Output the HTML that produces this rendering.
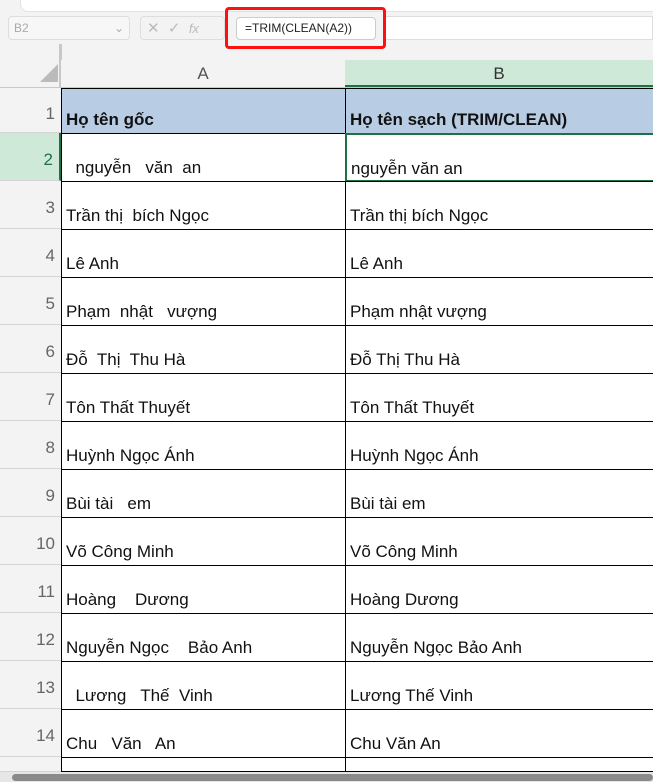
<!DOCTYPE html>
<html style="width:653px;height:782px;overflow:hidden"><head><meta charset="utf-8"><style>
*{margin:0;padding:0;box-sizing:border-box}
body{width:653px;height:782px;overflow:hidden;background:#f3f3f3;font-family:"Liberation Sans",sans-serif;position:relative}
.abs{position:absolute}
.rh{position:absolute;left:0;width:61px;background:#f3f3f3;border-bottom:1px solid #d4d4d4;color:#666;font-size:17px;text-align:right;padding-right:6px;overflow:hidden}
.cell{position:absolute;font-size:17px;color:#111;white-space:pre;padding-left:4px;overflow:hidden}
</style></head><body>
<div class="abs" style="left:20px;top:0;width:640px;height:12px;background:#fff;border-radius:0 0 8px 8px;border:1px solid #e2e2e2;border-top:none"></div>
<div class="abs" style="left:8px;top:16px;width:122px;height:24px;background:#f7f7f7;border:1px solid #ddd;border-radius:4px;font-size:12px;color:#aaa;padding:4px 5px">B2<span style="float:right">&#8964;</span></div>
<div class="abs" style="left:140px;top:16px;width:85px;height:24px;border:1px solid #ddd;border-radius:4px;color:#bbb;font-size:15px;padding:2px 6px">✕ &nbsp;✓ &nbsp;<i style="font-size:13px">fx</i></div>
<div class="abs" style="left:225px;top:7px;width:161px;height:42px;border:3px solid #ff1010;border-radius:4px"></div>
<div class="abs" style="left:236px;top:17px;width:140px;height:23px;background:#fff;border:1px solid #ccc;border-radius:4px;font-size:12px;color:#222;padding:3px 8px">=TRIM(CLEAN(A2))</div>
<div class="abs" style="left:386px;top:16px;width:267px;height:24px;background:#fff;border:1px solid #ddd;border-left:none"></div>
<div class="abs" style="left:59px;top:44px;width:3px;height:44px;background:#c8c8c8"></div>
<div class="abs" style="left:40px;top:64px;width:0;height:0;border-left:18px solid transparent;border-bottom:18px solid #bbb"></div>
<div class="abs" style="left:0;top:87px;width:653px;height:1px;background:#c8c8c8"></div>
<div class="abs" style="left:61px;top:60px;width:284px;height:27px;font-size:17px;color:#555;text-align:center;line-height:28px;background:#f3f3f3">A</div>
<div class="abs" style="left:345px;top:60px;width:308px;height:27px;font-size:17px;color:#333;text-align:center;line-height:28px;background:#cfe9d8;border-bottom:2px solid #1e7145">B</div>
<div class="abs" style="left:61px;top:88px;width:592px;height:684px;background:#fff"></div>
<div id="g"></div>
<div class="abs" style="left:0;top:772px;width:653px;height:10px;background:#e6e6e6"></div>
<div class="abs" style="left:12px;top:774px;width:641px;height:7px;background:#8a8a8a;border-radius:4px"></div>
<script>
var rows=[["Họ tên gốc","Họ tên sạch (TRIM/CLEAN)"],["  nguyễn   văn  an","nguyễn văn an"],["Trần thị  bích Ngọc","Trần thị bích Ngọc"],["Lê Anh","Lê Anh"],["Phạm  nhật   vượng","Phạm nhật vượng"],["Đỗ  Thị  Thu Hà","Đỗ Thị Thu Hà"],["Tôn Thất Thuyết","Tôn Thất Thuyết"],["Huỳnh Ngọc Ánh","Huỳnh Ngọc Ánh"],["Bùi tài   em","Bùi tài em"],["Võ Công Minh","Võ Công Minh"],["Hoàng    Dương","Hoàng Dương"],["Nguyễn Ngọc    Bảo Anh","Nguyễn Ngọc Bảo Anh"],["  Lương   Thế  Vinh","Lương Thế Vinh"],["Chu   Văn   An","Chu Văn An"],["",""]];
var h="",y=88;
for(var i=0;i<rows.length;i++){var H=i==0?45:48; if(i==14)H=772-y;
var hb=i==1?"background:#cfe9d8;color:#1e7145;border-right:2px solid #1e7145;":"";
h+='<div class="rh" style="top:'+y+'px;height:'+H+'px;line-height:'+(H+6)+'px;'+hb+'">'+(i<14?i+1:"")+'</div>';
var bg=i==0?"background:#b8cce4;font-weight:bold;":"";
var HH=i==14?H:H+1;
h+='<div class="cell" style="left:61px;top:'+y+'px;width:285px;height:'+HH+'px;border:1px solid #000;line-height:'+(H*2-28)+'px;'+bg+'">'+rows[i][0]+'</div>';
var sel=i==1?"border:2px solid #1e7145;":"border:1px solid #000;";
h+='<div class="cell" style="left:345px;top:'+y+'px;width:310px;height:'+HH+'px;'+sel+'line-height:'+(H*2-28)+'px;'+bg+'">'+rows[i][1]+'</div>';
y+=H;}
document.getElementById("g").innerHTML=h;
</script>
</body></html>
